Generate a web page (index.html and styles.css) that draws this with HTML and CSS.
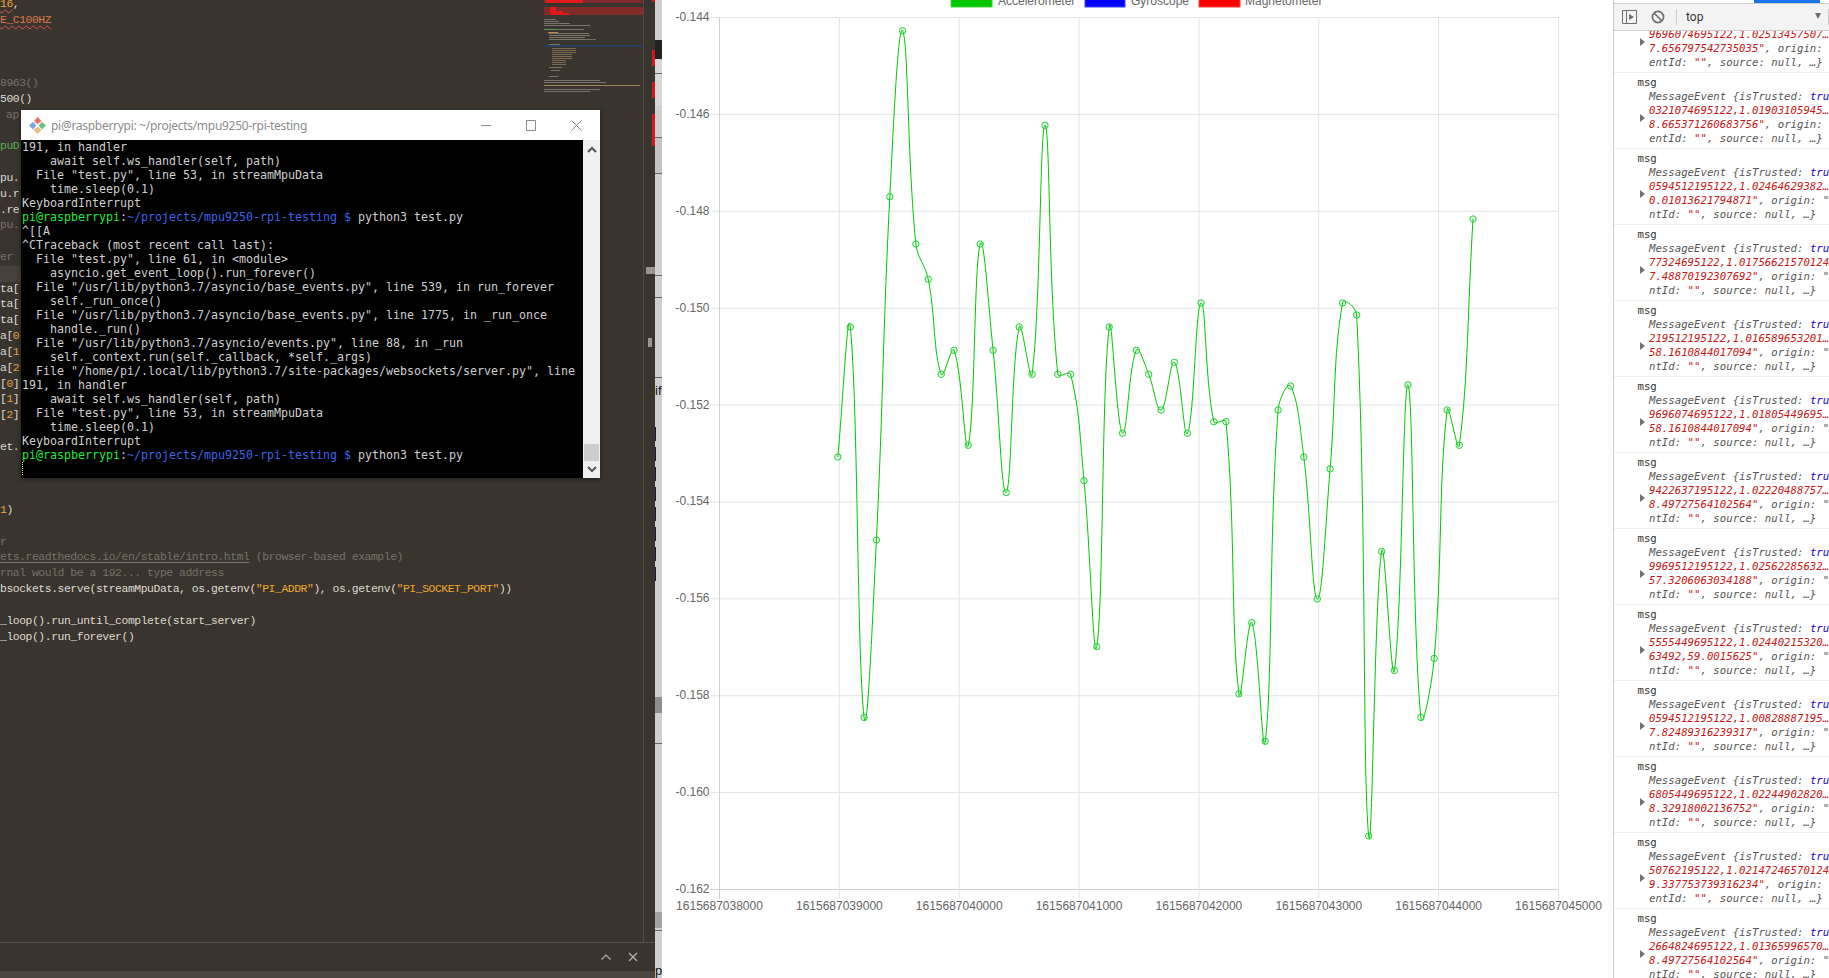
FILE: index.html
```html
<!DOCTYPE html>
<html lang="en">
<head>
<meta charset="utf-8">
<title>MPU9250 stream</title>
<link rel="stylesheet" href="styles.css">
</head>
<body>
<div class="screen">
  <section class="editor">
    <div class="editor-main">
      <div class="code">
        <div class="ln"><span class="num sq">16</span><span class="tx">,</span></div>
        <div class="ln"><span class="const sq">E_C100HZ</span></div>
        <div class="ln"></div><div class="ln"></div><div class="ln"></div>
        <div class="ln cm">8963()</div>
        <div class="ln tx">500()</div>
        <div class="ln cm indent">ap</div>
        <div class="ln"></div>
        <div class="ln green">puD</div>
        <div class="ln"></div>
        <div class="ln tx">pu.</div>
        <div class="ln tx">u.r</div>
        <div class="ln tx">.re</div>
        <div class="ln cm">pu.</div>
        <div class="ln"></div>
        <div class="ln cm">er</div>
        <div class="ln current"></div>
        <div class="ln tx">ta[</div>
        <div class="ln tx">ta[</div>
        <div class="ln tx">ta[</div>
        <div class="ln tx">a[<span class="num">0</span></div>
        <div class="ln tx">a[<span class="num">1</span></div>
        <div class="ln tx">a[<span class="num">2</span></div>
        <div class="ln tx">[<span class="num">0</span>]</div>
        <div class="ln tx">[<span class="num">1</span>]</div>
        <div class="ln tx">[<span class="num">2</span>]</div>
        <div class="ln"></div>
        <div class="ln tx">et.</div>
        <div class="ln"></div><div class="ln"></div><div class="ln"></div>
        <div class="ln tx"><span class="num">1</span>)</div>
        <div class="ln"></div>
        <div class="ln cm">r</div>
        <div class="ln cm"><span class="link">ets.readthedocs.io/en/stable/intro.html</span> (browser-based example)</div>
        <div class="ln cm">rnal would be a 192... type address</div>
        <div class="ln tx">bsockets.serve(streamMpuData, os.getenv(<span class="str">"PI_ADDR"</span>), os.getenv(<span class="str">"PI_SOCKET_PORT"</span>))</div>
        <div class="ln"></div>
        <div class="ln tx">_loop().run_until_complete(start_server)</div>
        <div class="ln tx">_loop().run_forever()</div>
      </div>
      <svg class="minimap" width="99" height="942" viewBox="544 0 99 942" aria-hidden="true">
        <rect x="544" y="0" width="99" height="3" fill="#7e2b29"/><rect x="546" y="0" width="37" height="3" fill="#e01a1a"/>
        <rect x="544" y="7" width="99" height="8" fill="#7e2b29"/><rect x="550" y="7" width="6" height="8" fill="#e01a1a"/><rect x="556" y="11" width="7" height="4" fill="#e01a1a"/><rect x="563" y="13" width="6" height="2" fill="#e01a1a"/>
        <rect x="544" y="45" width="99" height="2" fill="#27405a"/>
        <g fill="#7a756c">
          <rect x="544" y="19" width="12" height="1"/><rect x="544" y="21" width="15" height="1"/><rect x="544" y="23" width="26" height="1"/><rect x="544" y="25" width="46" height="1"/>
          <rect x="544" y="29" width="40" height="1"/><rect x="549" y="33" width="40" height="1"/><rect x="549" y="35" width="41" height="1"/><rect x="549" y="37" width="36" height="1"/><rect x="549" y="39" width="47" height="1"/>
          <rect x="549" y="44" width="11" height="1"/><rect x="549" y="67" width="13" height="1"/><rect x="551" y="70" width="9" height="1"/><rect x="549" y="76" width="9" height="1"/>
          <rect x="544" y="80" width="56" height="1"/><rect x="544" y="82" width="62" height="1"/><rect x="544" y="89" width="56" height="1"/><rect x="544" y="91" width="46" height="1"/>
        </g>
        <rect x="544" y="85" width="96" height="1" fill="#9c8656"/>
        <rect x="544" y="29" width="13" height="1" fill="#5f9a5a"/><rect x="548" y="32" width="10" height="1" fill="#c28a40"/>
        <g fill="#7f6a50">
          <rect x="552" y="48" width="24" height="1"/><rect x="552" y="50" width="24" height="1"/><rect x="552" y="52" width="24" height="1"/><rect x="552" y="54" width="20" height="1"/><rect x="552" y="56" width="20" height="1"/><rect x="552" y="58" width="20" height="1"/><rect x="552" y="60" width="14" height="1"/><rect x="552" y="62" width="14" height="1"/><rect x="552" y="64" width="14" height="1"/>
        </g>
      </svg>
      <div class="ruler">
        <i class="mark m1"></i><i class="mark m2"></i><i class="mark m3"></i><i class="mark m4"></i>
        <i class="grip g1"></i><i class="grip g2"></i>
      </div>
    </div>
    <div class="panel">
      <svg class="chev" width="12" height="8" viewBox="0 0 12 8" aria-hidden="true"><path d="M1.5 6.5 6 2l4.5 4.5" fill="none" stroke="#b5b1a9" stroke-width="1.2"/></svg>
      <svg class="close" width="10" height="10" viewBox="0 0 10 10" aria-hidden="true"><path d="M1 1l8 8M9 1l-8 8" fill="none" stroke="#b5b1a9" stroke-width="1.3"/></svg>
    </div>
    <div class="status"></div>
  </section>

  <svg class="strip" width="7" height="978" viewBox="655 0 7 978" aria-hidden="true">
    <rect x="655" y="0" width="7" height="978" fill="#cfcfcf"/>
    <rect x="655" y="40" width="7" height="19" fill="#222"/>
    <rect x="655" y="59" width="7" height="47" fill="#d8d8d8"/>
    <rect x="655" y="137" width="7" height="36" fill="#c4c4c4"/>
    <rect x="655" y="697" width="7" height="16" fill="#8f8f8f"/>
    <rect x="655" y="912" width="7" height="16" fill="#a2a2a2"/>
    <g fill="#666">
      <rect x="655" y="73" width="7" height="1"/><rect x="655" y="137" width="7" height="1"/><rect x="655" y="173" width="7" height="1"/><rect x="655" y="275" width="7" height="1"/><rect x="655" y="297" width="7" height="1"/><rect x="655" y="377" width="7" height="1"/><rect x="655" y="743" width="7" height="1"/><rect x="655" y="930" width="7" height="1"/>
    </g>
    <g fill="#2a0a4a">
      <rect x="655" y="427" width="1" height="14"/><rect x="655" y="447" width="1" height="14"/><rect x="655" y="467" width="1" height="14"/><rect x="655" y="487" width="1" height="14"/><rect x="655" y="507" width="1" height="14"/><rect x="655" y="527" width="1" height="14"/><rect x="655" y="547" width="1" height="14"/><rect x="655" y="567" width="1" height="14"/>
    </g>
    <text x="655" y="395" class="strip-text">if</text>
    <text x="655" y="975" class="strip-text">pt</text>
  </svg>

  <main class="chart">
    <svg id="plot" class="plot" width="951" height="978" viewBox="662 0 951 978" role="img" aria-label="Accelerometer line chart"></svg>
  </main>

  <aside class="devtools">
    <div class="tabline"><i class="tab-active"></i></div>
    <div class="toolbar">
      <svg class="tool-side" width="15" height="14" viewBox="0 0 15 14" aria-hidden="true"><path d="M.5.5h14v13H.5zM4.5.5v13" fill="none" stroke="#6e6e6e"/><path d="M7 4l5 3-5 3z" fill="#6e6e6e"/></svg>
      <svg class="tool-block" width="14" height="14" viewBox="0 0 14 14" aria-hidden="true"><circle cx="7" cy="7" r="5.6" fill="none" stroke="#6e6e6e" stroke-width="1.7"/><path d="M3 3l8 8" stroke="#6e6e6e" stroke-width="1.7"/></svg>
      <i class="tool-sep"></i>
      <span class="top-label">top</span>
      <i class="tool-arrow"></i>
      <i class="tool-sep end"></i>
    </div>
    <div class="console">
      <div class="row first"><i class="tri"></i><div class="r">9696074695122,1.02513457507&hellip;</div><div><span class="r">7.656797542735035"</span>, origin: "file://"</div><div>entId: <span class="r">""</span>, source: null, …}</div></div>
      <div class="row"><i class="tri"></i><div class="m">msg</div><div>MessageEvent {isTrusted: <span class="b">true</span>, data: </div><div class="r">0321074695122,1.01903105945&hellip;</div><div><span class="r">8.665371260683756"</span>, origin: "file://"</div><div>entId: <span class="r">""</span>, source: null, …}</div></div>
      <div class="row"><i class="tri"></i><div class="m">msg</div><div>MessageEvent {isTrusted: <span class="b">true</span>, data: </div><div class="r">0594512195122,1.02464629382&hellip;</div><div><span class="r">0.01013621794871"</span>, origin: "file://"</div><div>ntId: <span class="r">""</span>, source: null, …}</div></div>
      <div class="row"><i class="tri"></i><div class="m">msg</div><div>MessageEvent {isTrusted: <span class="b">true</span>, data: </div><div class="r">77324695122,1.01756621570124&hellip;</div><div><span class="r">7.48870192307692"</span>, origin: "file://"</div><div>ntId: <span class="r">""</span>, source: null, …}</div></div>
      <div class="row"><i class="tri"></i><div class="m">msg</div><div>MessageEvent {isTrusted: <span class="b">true</span>, data: </div><div class="r">219512195122,1.016589653201&hellip;</div><div><span class="r">58.1610844017094"</span>, origin: "file://"</div><div>ntId: <span class="r">""</span>, source: null, …}</div></div>
      <div class="row"><i class="tri"></i><div class="m">msg</div><div>MessageEvent {isTrusted: <span class="b">true</span>, data: </div><div class="r">9696074695122,1.01805449695&hellip;</div><div><span class="r">58.1610844017094"</span>, origin: "file://"</div><div>ntId: <span class="r">""</span>, source: null, …}</div></div>
      <div class="row"><i class="tri"></i><div class="m">msg</div><div>MessageEvent {isTrusted: <span class="b">true</span>, data: </div><div class="r">9422637195122,1.02220488757&hellip;</div><div><span class="r">8.49727564102564"</span>, origin: "file://"</div><div>ntId: <span class="r">""</span>, source: null, …}</div></div>
      <div class="row"><i class="tri"></i><div class="m">msg</div><div>MessageEvent {isTrusted: <span class="b">true</span>, data: </div><div class="r">9969512195122,1.02562285632&hellip;</div><div><span class="r">57.3206063034188"</span>, origin: "file://"</div><div>ntId: <span class="r">""</span>, source: null, …}</div></div>
      <div class="row"><i class="tri"></i><div class="m">msg</div><div>MessageEvent {isTrusted: <span class="b">true</span>, data: </div><div class="r">5555449695122,1.02440215320&hellip;</div><div><span class="r">63492,59.0015625"</span>, origin: "file://"</div><div>ntId: <span class="r">""</span>, source: null, …}</div></div>
      <div class="row"><i class="tri"></i><div class="m">msg</div><div>MessageEvent {isTrusted: <span class="b">true</span>, data: </div><div class="r">0594512195122,1.00828887195&hellip;</div><div><span class="r">7.82489316239317"</span>, origin: "file://"</div><div>ntId: <span class="r">""</span>, source: null, …}</div></div>
      <div class="row"><i class="tri"></i><div class="m">msg</div><div>MessageEvent {isTrusted: <span class="b">true</span>, data: </div><div class="r">6805449695122,1.02244902820&hellip;</div><div><span class="r">8.32918002136752"</span>, origin: "file://"</div><div>ntId: <span class="r">""</span>, source: null, …}</div></div>
      <div class="row"><i class="tri"></i><div class="m">msg</div><div>MessageEvent {isTrusted: <span class="b">true</span>, data: </div><div class="r">50762195122,1.02147246570124&hellip;</div><div><span class="r">9.337753739316234"</span>, origin: "file://"</div><div>entId: <span class="r">""</span>, source: null, …}</div></div>
      <div class="row"><i class="tri"></i><div class="m">msg</div><div>MessageEvent {isTrusted: <span class="b">true</span>, data: </div><div class="r">2664824695122,1.01365996570&hellip;</div><div><span class="r">8.49727564102564"</span>, origin: "file://"</div><div>ntId: <span class="r">""</span>, source: null, …}</div></div>
    </div>
  </aside>

  <div class="terminal">
    <div class="term-title">
      <svg class="git" width="17" height="17" viewBox="0 0 17 17" aria-hidden="true">
        <path d="M8.5 0 12.5 4 8.5 7.2 5 4z" fill="#e8736a"/>
        <path d="M4 4.8 7.4 8.5 4 12.6 0 8.5z" fill="#7da7e0"/>
        <path d="M13 4.8 17 8.5 13 12.6 9.6 8.5z" fill="#6cc07a"/>
        <path d="M8.5 9.8 12.5 13 8.5 17 4.5 13z" fill="#e6bd7a"/>
      </svg>
      <span class="term-name">pi@raspberrypi: ~/projects/mpu9250-rpi-testing</span>
      <svg class="win min" width="10" height="10" viewBox="0 0 10 10" aria-hidden="true"><path d="M0 5.5h10" stroke="#8a8a8a"/></svg>
      <svg class="win max" width="10" height="11" viewBox="0 0 10 11" aria-hidden="true"><path d="M.5.5h9v10h-9z" fill="none" stroke="#8a8a8a"/></svg>
      <svg class="win cls" width="11" height="11" viewBox="0 0 11 11" aria-hidden="true"><path d="M.5.5l10 10M10.5.5l-10 10" stroke="#8a8a8a" fill="none"/></svg>
    </div>
    <div class="term-body">
<pre class="term-text">191, in handler
    await self.ws_handler(self, path)
  File "test.py", line 53, in streamMpuData
    time.sleep(0.1)
KeyboardInterrupt
<span class="pg">pi@raspberrypi</span>:<span class="pb">~/projects/mpu9250-rpi-testing $</span> python3 test.py
^[[A
^CTraceback (most recent call last):
  File "test.py", line 61, in &lt;module&gt;
    asyncio.get_event_loop().run_forever()
  File "/usr/lib/python3.7/asyncio/base_events.py", line 539, in run_forever
    self._run_once()
  File "/usr/lib/python3.7/asyncio/base_events.py", line 1775, in _run_once
    handle._run()
  File "/usr/lib/python3.7/asyncio/events.py", line 88, in _run
    self._context.run(self._callback, *self._args)
  File "/home/pi/.local/lib/python3.7/site-packages/websockets/server.py", line
191, in handler
    await self.ws_handler(self, path)
  File "test.py", line 53, in streamMpuData
    time.sleep(0.1)
KeyboardInterrupt
<span class="pg">pi@raspberrypi</span>:<span class="pb">~/projects/mpu9250-rpi-testing $</span> python3 test.py
<i class="cursor"></i></pre>
      <div class="term-scroll">
        <svg width="10" height="7" viewBox="0 0 10 7" aria-hidden="true"><path d="M1 6l4-4 4 4" fill="none" stroke="#555" stroke-width="2"/></svg>
        <i class="thumb"></i>
        <svg width="10" height="7" viewBox="0 0 10 7" aria-hidden="true"><path d="M1 1l4 4 4-4" fill="none" stroke="#555" stroke-width="2"/></svg>
      </div>
    </div>
  </div>
</div>
<script src="chart.js"></script>
</body>
</html>
```

FILE: styles.css
```css
* { box-sizing: border-box; }
html, body { margin: 0; padding: 0; height: 978px; overflow: hidden; background: #fff; }
.screen { position: relative; display: flex; width: 1829px; height: 978px; overflow: hidden; }

/* editor */
.editor { flex: 0 0 655px; display: flex; flex-direction: column; background: #39342e; }
.editor-main { flex: 0 0 942px; display: flex; overflow: hidden; }
.code { flex: 0 0 544px; margin-top: -3px; font: 11.4px/15.82px "Liberation Mono", monospace; letter-spacing: -0.44px; overflow: hidden; }
.ln { height: 15.82px; white-space: pre; }
.tx { color: #dedad0; }
.cm { color: #77726a; }
.num { color: #e8a23c; }
.const { color: #d9774f; }
.green { color: #58b050; }
.str { color: #f0a82e; }
.link { text-decoration: underline; text-underline-offset: 2px; }
.sq { text-decoration: underline wavy #d9533a 1px; text-underline-offset: 2px; }
.indent { padding-left: 6px; }
.current { background: #46413a; }
.minimap { flex: 0 0 99px; display: block; }
.ruler { position: relative; flex: 0 0 12px; border-left: 1px solid #4f4a43; }
.mark { position: absolute; left: 8px; width: 3px; background: #d01c1c; }
.m1 { top: 0; height: 2px; }
.m2 { top: 50px; height: 16px; }
.m3 { top: 82px; height: 16px; }
.m4 { top: 114px; height: 32px; }
.grip { position: absolute; background: #9a958c; }
.g1 { left: 2px; top: 267px; width: 10px; height: 7px; }
.g2 { left: 4px; top: 338px; width: 4px; height: 9px; }
.panel { flex: 0 0 29px; display: flex; align-items: center; justify-content: flex-end; gap: 16px; padding-right: 17px; border-top: 1px solid #5a554e; }
.status { flex: 0 0 7px; background: #4a453f; }
.strip { flex: 0 0 7px; display: block; }
.strip-text { font: 13px "Liberation Sans", sans-serif; fill: #111; }

/* chart */
.chart { flex: 0 0 951px; background: #fff; }
.plot { display: block; }
.plot text { font: 12px "Liberation Sans", Arial, sans-serif; fill: #666; }

/* devtools */
.devtools { flex: 0 0 216px; display: flex; flex-direction: column; border-left: 1px solid #ccc; background: #fff; overflow: hidden; }
.tabline { position: relative; flex: 0 0 4px; border-bottom: 1px solid #ccc; }
.tab-active { position: absolute; left: 140px; top: 0; width: 66px; height: 3px; background: #1a73e8; }
.toolbar { flex: 0 0 27px; display: flex; align-items: center; padding-left: 8px; background: #f3f3f3; border-bottom: 1px solid #ccc; }
.tool-side { flex: none; }
.tool-block { flex: none; margin-left: 14px; }
.tool-sep { flex: none; width: 1px; height: 16px; margin-left: 11px; background: #ccc; }
.tool-sep.end { margin-left: 7px; }
.top-label { margin-left: 9px; flex: 1; font: 12px/1 Roboto, sans-serif; color: #333; }
.tool-arrow { flex: none; width: 0; height: 0; border-left: 3.5px solid transparent; border-right: 3.5px solid transparent; border-top: 6px solid #6e6e6e; margin-bottom: 3px; }
.console { flex: 1; overflow: hidden; font: italic 10.7px/14px "DejaVu Sans Mono", monospace; color: #565656; white-space: nowrap; }
.row { position: relative; height: 76px; padding: 3px 0 2px 35px; border-bottom: 1px solid #f0f0f0; }
.row.first { height: 45px; margin-top: -3px; padding-top: 0; }
.row .m { font-style: normal; color: #333; margin-left: -11.5px; }
.r { color: #c41a16; }
.b { color: #1c00cf; }
.tri { position: absolute; left: 26px; top: 41px; width: 0; height: 0; border-top: 4px solid transparent; border-bottom: 4px solid transparent; border-left: 5px solid #727272; }
.row.first .tri { top: 10px; }

/* terminal window */
.terminal { position: absolute; left: 21px; top: 110px; width: 579px; height: 368px; display: flex; flex-direction: column; background: #fff; box-shadow: 0 1px 5px rgba(0,0,0,.45); }
.term-title { flex: 0 0 30px; display: flex; align-items: center; padding-left: 8px; }
.git { flex: none; }
.term-name { flex: 1; margin-left: 5px; font: 12px "Noto Sans", sans-serif; letter-spacing: -0.29px; color: #8c8c8c; white-space: nowrap; }
.win { flex: none; }
.win.min { margin-right: 35px; }
.win.max { margin-right: 35px; }
.win.cls { margin-right: 18px; }
.term-body { flex: 1; display: flex; min-height: 0; }
.term-text { flex: 0 0 562px; margin: 0; padding-left: 1px; background: #000; color: #cfcfcf; font: 11.63px/14px "DejaVu Sans Mono", monospace; overflow: hidden; }
.pg { color: #22e83a; }
.pb { color: #3f63e8; }
.cursor { display: inline-block; width: 0; height: 13px; border-left: 1px dotted #ddd; vertical-align: top; }
.term-scroll { flex: 1; display: flex; flex-direction: column; align-items: center; background: #f0f0f0; padding: 6px 0 5px; }
.thumb { display: block; margin-top: auto; margin-bottom: 5px; width: 15px; height: 17px; background: #cdcdcd; }
```

FILE: chart.js
```js
(function () {
  var NS = 'http://www.w3.org/2000/svg';
  var svg = document.getElementById('plot');
  var L = 719.5, R = 1558.5, T = 17.5, B = 889.5;

  function el(name, attrs, text) {
    var n = document.createElementNS(NS, name);
    for (var k in attrs) n.setAttribute(k, attrs[k]);
    if (text) n.textContent = text;
    svg.appendChild(n);
    return n;
  }

  var i, pos;
  for (i = 0; i <= 9; i++) {
    pos = T + (B - T) * i / 9;
    el('line', { x1: L - 9, x2: R, y1: pos, y2: pos, stroke: i === 9 ? '#cfcfcf' : '#e3e3e3', 'stroke-width': 1 });
    el('text', { x: L - 10, y: pos + 3.5, 'text-anchor': 'end' }, (-0.144 - 0.002 * i).toFixed(3));
  }
  for (i = 0; i <= 7; i++) {
    pos = L + (R - L) * i / 7;
    el('line', { x1: pos, x2: pos, y1: T, y2: B + 9, stroke: i === 0 ? '#cfcfcf' : '#e3e3e3', 'stroke-width': 1 });
    el('text', { x: pos, y: B + 20.5, 'text-anchor': 'middle' }, String(1615687038000 + i * 1000));
  }

  var legend = [
    [951, 41, '#00c800', '#3fd63f', 'Accelerometer', 998],
    [1085, 40, '#0000ff', '#4040ff', 'Gyroscope', 1131],
    [1199, 41, '#ff0000', '#ff4040', 'Magnetometer', 1245]
  ];
  legend.forEach(function (d) {
    el('rect', { x: d[0], y: -6, width: d[1], height: 13, fill: d[2], stroke: d[3] });
    el('text', { x: d[5], y: 5 }, d[4]);
  });

  var p = [
    [837.8,457],[850.3,327],[864.1,717.4],[876.4,540],[889.8,196.7],[902.6,30.7],[915.9,244],[928.3,279.3],
    [941.2,374.3],[954,350.3],[968.2,445.3],[980.2,244],[993.1,350.3],[1006.2,492.5],[1019.2,327],[1032.1,374.3],
    [1045,125.3],[1057.8,374.3],[1070.7,374.3],[1084,480.7],[1096.8,646.6],[1109.2,327],[1122.5,433.2],[1136.3,350.3],
    [1148.7,374.3],[1161.1,410],[1174.4,362.3],[1187.5,433.2],[1201,303],[1213.8,421.7],[1226,421.7],[1238.9,693.8],
    [1251.7,622.6],[1265.2,741.3],[1278.1,410],[1290.6,386],[1303.8,457],[1317.3,599],[1330.1,468.9],[1342.5,303],
    [1356.7,315],[1368.7,836],[1381.6,551.5],[1394.4,670.5],[1408,385],[1420.8,717.4],[1434.2,658.4],[1447.1,410],
    [1459.3,445.3],[1473,219]
  ];

  var t = 0.4, cps = [];
  function dist(a, b) { return Math.sqrt(Math.pow(a[0] - b[0], 2) + Math.pow(a[1] - b[1], 2)); }
  p.forEach(function (c, j) {
    var a = p[j - 1] || c, b = p[j + 1] || c;
    var d1 = dist(a, c), d2 = dist(c, b), s = d1 + d2 || 1;
    var f1 = t * d1 / s, f2 = t * d2 / s;
    cps.push({
      px: c[0] - f1 * (b[0] - a[0]), py: c[1] - f1 * (b[1] - a[1]),
      nx: c[0] + f2 * (b[0] - a[0]), ny: c[1] + f2 * (b[1] - a[1])
    });
  });
  var d = 'M' + p[0][0] + ' ' + p[0][1];
  for (i = 1; i < p.length; i++) {
    d += 'C' + cps[i - 1].nx.toFixed(2) + ' ' + cps[i - 1].ny.toFixed(2) + ' ' +
      cps[i].px.toFixed(2) + ' ' + cps[i].py.toFixed(2) + ' ' + p[i][0] + ' ' + p[i][1];
  }
  el('path', { d: d, fill: 'none', stroke: '#00c800', 'stroke-width': 1 });
  p.forEach(function (c) {
    el('circle', { cx: c[0], cy: c[1], r: 3.2, fill: 'rgba(0,200,0,.08)', stroke: '#22d13a', 'stroke-width': 1 });
  });
})();
```
